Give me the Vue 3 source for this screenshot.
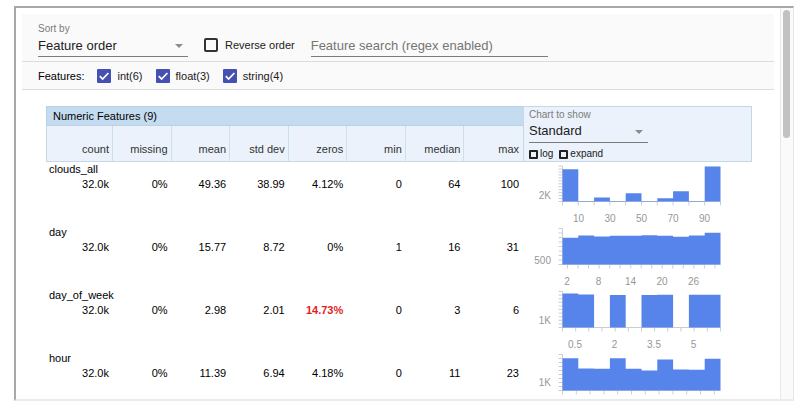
<script setup>
import { ref } from 'vue'

const sortBy = ref('Feature order')
const reverse = ref(false)
const query = ref('')
const chartType = ref('Standard')
const log = ref(false)
const expand = ref(false)
const kinds = ref([
  { id: 'int', label: 'int(6)', on: true },
  { id: 'float', label: 'float(3)', on: true },
  { id: 'string', label: 'string(4)', on: true },
])

const columns = ['count', 'missing', 'mean', 'std dev', 'zeros', 'min', 'median', 'max']

// Chart geometry, in the user units of each histogram
const LEFT = 39.5
const BASE = 39.5
const BAR = 15.8
const WIDTH = BAR * 10

const features = [
  {
    name: 'clouds_all',
    stats: ['32.0k', '0%', '49.36', '38.99', '4.12%', '0', '64', '100'],
    bars: [32.3, 0.5, 4, 0.5, 8.3, 0.5, 3.3, 10.3, 0.5, 35],
    yLabel: '2K', yLabelAt: 36.5, yStep: 2.95, yTicks: 13, xStart: 0, xStep: 15.8,
    xLabels: [['10', 55.5], ['30', 87], ['50', 118.5], ['70', 150], ['90', 181.5]],
  },
  {
    name: 'day',
    stats: ['32.0k', '0%', '15.77', '8.72', '0%', '1', '16', '31'],
    bars: [26.7, 29, 28, 28.7, 28.7, 29.3, 28.7, 27.7, 29, 31.7],
    yLabel: '500', yLabelAt: 38.5, yStep: 4.5, yTicks: 9, xStart: 5, xStep: 10.53,
    xLabels: [['2', 44], ['8', 75.5], ['14', 107.5], ['20', 139], ['26', 170.5]],
  },
  {
    name: 'day_of_week',
    stats: ['32.0k', '0%', '2.98', '2.01', '14.73%', '0', '3', '6'],
    alert: 4,
    bars: [34, 33, 0, 32.5, 0, 32.5, 32.7, 0, 32.7, 32.7],
    yLabel: '1K', yLabelAt: 35.5, yStep: 3.6, yTicks: 11, xStart: 0, xStep: 13.16,
    xLabels: [['0.5', 52], ['2', 91.5], ['3.5', 131], ['5', 170.5]],
  },
  {
    name: 'hour',
    stats: ['32.0k', '0%', '11.39', '6.94', '4.18%', '0', '11', '23'],
    bars: [32.3, 22, 21.7, 32.3, 21.7, 20, 31, 21, 20.7, 31.7],
    yLabel: '1K', yLabelAt: 34.5, yStep: 4, yTicks: 10, xStart: 0, xStep: 13.8,
    xLabels: [],
  },
]

function barPath(bars) {
  let d = `M${LEFT} ${BASE}`
  bars.forEach((h, i) => {
    d += `V${BASE - h}H${LEFT + BAR * (i + 1)}`
  })
  return d + `V${BASE}Z`
}

function axisPath(f) {
  const top = BASE - f.yStep * (f.yTicks - 1)
  let d = `M${LEFT} ${top}V${BASE}H${LEFT + WIDTH}`
  for (let i = 0; i < f.yTicks; i++) d += `M${LEFT - 4} ${BASE - i * f.yStep}h4`
  for (let x = f.xStart; x <= WIDTH + 0.5; x += f.xStep) d += `M${LEFT + x} ${BASE}v4`
  return d
}
</script>

<template>
  <div class="page">
    <main class="frame">
      <div class="content">
        <form class="filters" @submit.prevent>
          <div class="row fields">
            <div class="field sort">
              <label for="sort">Sort by</label>
              <div class="select">
                <select id="sort" v-model="sortBy">
                  <option>Feature order</option>
                  <option>Non-uniformity</option>
                  <option>Alphabetical</option>
                </select>
                <svg class="arrow" viewBox="0 0 8 4"><path d="M0 0h8L4 4z" /></svg>
              </div>
            </div>
            <label class="check reverse">
              <input v-model="reverse" type="checkbox" />
              <span>Reverse order</span>
            </label>
            <input v-model="query" class="search" type="text" aria-label="Feature search" placeholder="Feature search (regex enabled)" />
          </div>
          <div class="row kinds">
            <span class="kinds-title">Features:</span>
            <label v-for="k in kinds" :key="k.id" class="check">
              <span class="tick">
                <input v-model="k.on" type="checkbox" />
                <svg v-if="k.on" viewBox="0 0 14 14"><path d="M2.8 7.2l2.8 2.8 5.8-6" /></svg>
              </span>
              <span>{{ k.label }}</span>
            </label>
          </div>
        </form>

        <table class="stats">
          <colgroup>
            <col class="col-first" />
            <col v-for="n in 7" :key="n" />
            <col class="col-chart" />
          </colgroup>
          <thead>
            <tr>
              <th class="title" colspan="8" scope="colgroup">Numeric Features (9)</th>
              <th class="chart-head" rowspan="2">
                <div class="field">
                  <label for="chart">Chart to show</label>
                  <div class="select">
                    <select id="chart" v-model="chartType">
                      <option>Standard</option>
                      <option>Quantiles</option>
                    </select>
                    <svg class="arrow" viewBox="0 0 8 4"><path d="M0 0h8L4 4z" /></svg>
                  </div>
                </div>
                <div class="options">
                  <label class="check small"><input v-model="log" type="checkbox" /><span>log</span></label>
                  <label class="check small"><input v-model="expand" type="checkbox" /><span>expand</span></label>
                </div>
              </th>
            </tr>
            <tr>
              <th v-for="c in columns" :key="c" class="column" scope="col">{{ c }}</th>
            </tr>
          </thead>
          <tbody v-for="f in features" :key="f.name">
            <tr>
              <th class="name" colspan="8" scope="rowgroup">{{ f.name }}</th>
              <td class="chart" rowspan="2">
                <svg viewBox="0 0 229 63" role="img" :aria-label="f.name">
                  <path class="axis" :d="axisPath(f)" />
                  <path class="bars" :d="barPath(f.bars)" />
                  <text class="y-label" x="28" :y="f.yLabelAt">{{ f.yLabel }}</text>
                  <text v-for="l in f.xLabels" :key="l[0]" class="x-label" :x="l[1]" y="60">{{ l[0] }}</text>
                </svg>
              </td>
            </tr>
            <tr>
              <td v-for="(s, i) in f.stats" :key="i" class="value" :class="{ alert: f.alert === i }">{{ s }}</td>
            </tr>
          </tbody>
        </table>
      </div>
      <div class="track"><div class="thumb"></div></div>
    </main>
  </div>
</template>

<style>
body {
  background: #fff;
}
</style>

<style scoped>
.page {
  box-sizing: border-box;
  height: 100vh;
  padding: 6px 6px 10px 14px;
  display: flex;
  font-family: "Liberation Sans", Arial, sans-serif;
  font-size: 11px;
  line-height: 14px;
  color: #212121;
}
.frame {
  flex: 1;
  display: flex;
  min-width: 0;
  overflow: hidden;
  border: 2px solid #a8a8a8;
  border-right: 1px solid #e6e6e6;
  border-bottom-color: #ebebeb;
}
.content {
  flex: 1;
  min-width: 0;
  padding: 6px 6px 0;
}
.track {
  flex: none;
  width: 13px;
  padding: 2px;
  box-sizing: border-box;
  background: #fafafa;
  border-left: 1px solid #e8e8e8;
}
.thumb {
  width: 7px;
  height: 33%;
  border-radius: 4px;
  background: #c1c1c1;
}
.filters {
  background: #fafafa;
}
.row {
  display: flex;
  padding: 0 16px;
}
.fields {
  align-items: flex-end;
  gap: 16px;
  padding-top: 9px;
  padding-bottom: 4px;
  border-bottom: 1px solid #dcdcdc;
}
.kinds {
  align-items: center;
  gap: 13px;
  height: 27px;
  border-bottom: 1px solid #dcdcdc;
}
.kinds-title {
  color: #000;
}
.field {
  display: flex;
  flex-direction: column;
}
.field > label {
  font-size: 10px;
  line-height: 12px;
  color: #7b7b7b;
}
.sort {
  width: 150px;
  gap: 1px;
}
.select {
  display: flex;
  align-items: center;
  border-bottom: 1px solid #7c7c7c;
}
.select select {
  appearance: none;
  box-sizing: border-box;
  flex: 1;
  min-width: 0;
  height: 20px;
  padding: 0 0 2px;
  border: 0;
  background: none;
  font: 13px "Liberation Sans", Arial, sans-serif;
  color: #212121;
}
.arrow {
  width: 8px;
  height: 4px;
  margin-right: 5px;
  fill: #8c8c8c;
}
.check {
  display: flex;
  align-items: center;
  gap: 7px;
  color: #212121;
}
.kinds .check {
  gap: 6px;
}
.check input {
  appearance: none;
  display: block;
  box-sizing: border-box;
  width: 14px;
  height: 14px;
  margin: 0;
  border: 2px solid #333;
  border-radius: 2px;
}
.reverse {
  height: 24px;
}
.search {
  box-sizing: border-box;
  width: 237px;
  height: 21px;
  padding: 0 0 2px;
  border: 0;
  border-bottom: 1px solid #7c7c7c;
  background: none;
  font: 13px "Liberation Sans", Arial, sans-serif;
  color: #212121;
}
.search::placeholder {
  color: #757575;
}
.tick {
  display: grid;
}
.tick > * {
  grid-area: 1 / 1;
}
.tick svg {
  width: 14px;
  height: 14px;
  fill: none;
  stroke: #fff;
  stroke-width: 1.7;
  pointer-events: none;
}
.tick input:checked {
  background: #4650b2;
  border-color: #4650b2;
  border-radius: 1px;
}
.stats {
  table-layout: fixed;
  width: calc(100% - 46px);
  margin: 16px 22px 0 24px;
  border-collapse: separate;
  border-spacing: 0;
}
.col-first {
  width: 67px;
}
.col-chart {
  width: 229px;
}
.stats th,
.stats td {
  box-sizing: border-box;
  padding: 0;
  font-weight: normal;
  text-align: left;
}
.stats .title {
  height: 20px;
  padding-left: 6px;
  background: #c5dcf0;
  border: 1px solid #b7d2e6;
  border-right: 0;
  color: #000;
}
.stats .column {
  height: 36px;
  padding: 0 3px 5px 0;
  vertical-align: bottom;
  text-align: right;
  background: #ebf2fb;
  border-right: 1px solid #cfdfea;
  border-bottom: 1px solid #c3d9e6;
  color: #333;
}
.stats .column:first-child {
  border-left: 1px solid #c3d9e6;
}
.stats .column:last-child {
  padding-right: 4px;
  border-right: 0;
}
.stats .chart-head {
  padding: 2px 0 0 5px;
  vertical-align: top;
  background: #ebf2fb;
  border: 1px solid #c3d9e6;
}
.chart-head .field {
  width: 119px;
}
.chart-head .select select {
  height: 21px;
}
.options {
  display: flex;
  gap: 6px;
  margin-top: 4px;
}
.small {
  gap: 2px;
  font-size: 10px;
}
.small input {
  width: 9px;
  height: 9px;
  border-color: #212121;
  border-radius: 1px;
}
.stats .name {
  height: 14px;
  padding-left: 3px;
  color: #000;
}
.stats .value {
  height: 49px;
  padding: 1px 4px 0 0;
  vertical-align: top;
  text-align: right;
  color: #000;
}
.stats .alert {
  font-weight: bold;
  color: #e01e24;
}
.chart svg {
  display: block;
  width: 100%;
  height: 63px;
}
.bars {
  fill: #5784ea;
}
.axis {
  fill: none;
  stroke: #c9ced6;
}
.chart text {
  font-size: 10px;
  fill: #979797;
}
.y-label {
  text-anchor: end;
}
.x-label {
  text-anchor: middle;
}
</style>
